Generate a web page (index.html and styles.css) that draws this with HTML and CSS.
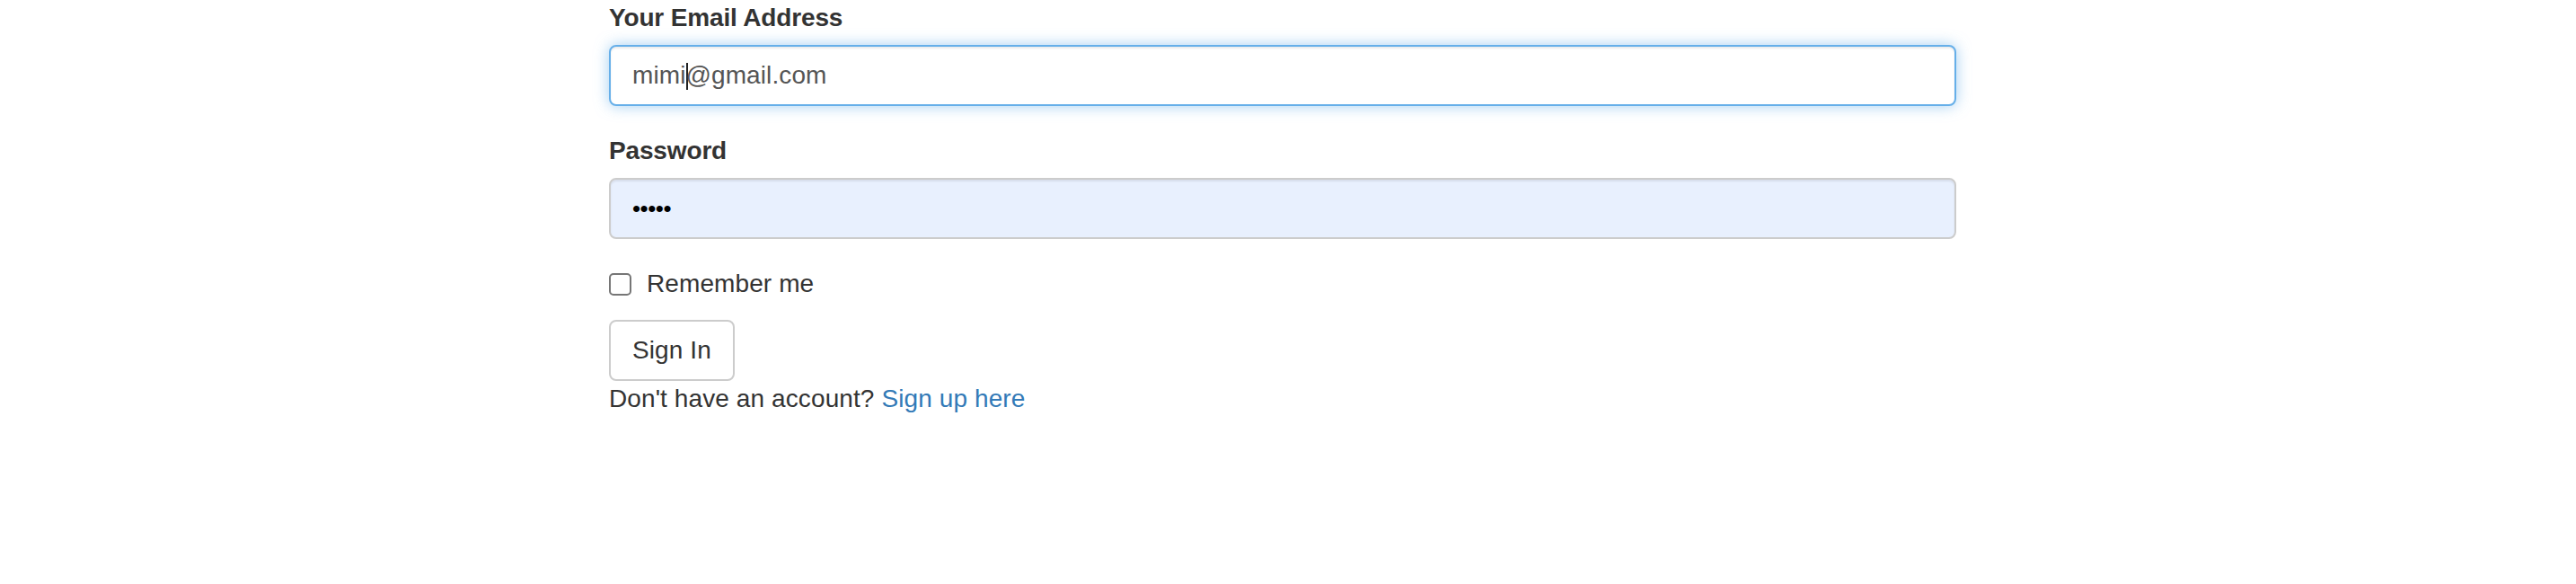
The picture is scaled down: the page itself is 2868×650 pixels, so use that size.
FILE: index.html
```html
<!DOCTYPE html>
<html lang="en">
<head>
<meta charset="utf-8">
<title>Sign In</title>
<link rel="stylesheet" href="styles.css">
</head>
<body>
<div class="page">
  <div class="container">
    <form class="login-form">
      <div class="form-group">
        <label class="field-label">Your Email Address</label>
        <div class="form-control is-focused"><span class="value">mimi<span class="caret"></span>@gmail.com</span></div>
      </div>
      <div class="form-group">
        <label class="field-label">Password</label>
        <div class="form-control is-autofill"><span class="dots">•••••</span></div>
      </div>
      <div class="checkbox">
        <label class="check-label"><span class="check-box"></span>Remember me</label>
      </div>
      <button type="button" class="btn">Sign In</button>
      <p class="signup">Don't have an account? <a class="link" href="#">Sign up here</a></p>
    </form>
  </div>
</div>
</body>
</html>
```

FILE: styles.css
```css
* { box-sizing: border-box; }
html, body { margin: 0; padding: 0; background: #fff; }
body {
  font-family: "Liberation Sans", Arial, sans-serif;
  font-size: 28px;
  line-height: 40px;
  color: #333;
  letter-spacing: 0.1px;
}
.page { padding-right: 15px; }
.container { width: 2340px; margin: 0 auto; }
.login-form { margin-left: 421.5px; width: 1500px; }
.form-group { margin-bottom: 30px; }
.field-label {
  display: inline-block;
  font-weight: 700;
  margin-bottom: 10px;
  letter-spacing: -0.15px;
}
.form-control {
  display: flex;
  align-items: center;
  height: 68px;
  padding: 12px 24px;
  border: 2px solid #ccc;
  border-radius: 8px;
  background: #fff;
  color: #555;
  box-shadow: inset 0 2px 2px rgba(0,0,0,.075);
}
.form-control.is-focused {
  border-color: #66afe9;
  box-shadow: inset 0 2px 2px rgba(0,0,0,.075), 0 0 16px rgba(102,175,233,.6);
}
.form-control.is-autofill { background: #e8f0fe; }
.value { white-space: nowrap; }
.caret {
  display: inline-block;
  width: 0;
  height: 30px;
  border-left: 2px solid #222;
  vertical-align: -7px;
  margin-right: -2px;
}
.dots {
  color: #000;
  font-size: 26px;
  letter-spacing: -0.5px;
}
.checkbox { margin: 20px 0; }
.check-label {
  display: flex;
  align-items: center;
  min-height: 40px;
}
.check-box {
  width: 25px;
  height: 25px;
  border: 2px solid #767676;
  border-radius: 5px;
  margin-right: 17px;
  background: #fff;
}
.btn {
  display: block;
  font-family: inherit;
  font-size: 28px;
  line-height: 40px;
  letter-spacing: 0.1px;
  color: #333;
  background: #fff;
  border: 2px solid #ccc;
  border-radius: 8px;
  padding: 12px 24px;
  margin: 0;
}
.signup { margin: 0; }
.link { color: #337ab7; text-decoration: none; }
```
